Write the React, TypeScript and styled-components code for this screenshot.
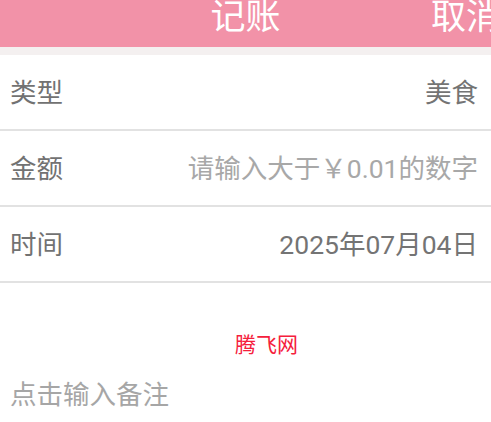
import React from "react";
import styled, { createGlobalStyle } from "styled-components";

const Global = createGlobalStyle`
  html, body {
    margin: 0;
    padding: 0;
    background: #ffffff;
  }
  body {
    font-family: Roboto, "Noto Sans CJK SC", sans-serif;
    overflow: hidden;
  }
`;

const Screen = styled.div`
  width: 491px;
  height: 422px;
  overflow: hidden;
  display: flex;
  flex-direction: column;
  background: #ffffff;
`;

const TopBar = styled.header`
  height: 47px;
  flex: none;
  background: #f292a8;
  display: grid;
  grid-template-columns: 1fr auto 1fr;
  align-items: end;
  padding-bottom: 19px;
  box-sizing: border-box;
  overflow: hidden;
  color: #ffffff;
  font-size: 35px;
  line-height: 35px;
  white-space: nowrap;
`;

const Title = styled.div`
  grid-column: 2;
`;

const Cancel = styled.div`
  grid-column: 3;
  justify-self: end;
  margin-right: -10px;
`;

const Strip = styled.div`
  height: 8px;
  flex: none;
  background: #f4f0f0;
`;

const Row = styled.div`
  height: 74px;
  flex: none;
  display: flex;
  align-items: center;
  justify-content: space-between;
  padding: 0 13px 0 10px;
  border-bottom: 2px solid #e2e2e2;
  font-size: 26.5px;
  line-height: 27px;
`;

const Label = styled.span`
  color: #727272;
`;

const Value = styled.span<{ $placeholder?: boolean }>`
  color: ${(p) => (p.$placeholder ? "#a8a8a8" : "#747474")};
`;

const Brand = styled.div`
  margin-top: 52px;
  text-align: center;
  padding-left: 42px;
  font-size: 21px;
  line-height: 21px;
  color: #f5203c;
`;

const Remark = styled.div`
  margin-top: 26px;
  padding-left: 10px;
  font-size: 26.5px;
  line-height: 26px;
  color: #a6a6a6;
`;

export default function App() {
  return (
    <Screen>
      <Global />
      <TopBar>
        <Title>记账</Title>
        <Cancel>取消</Cancel>
      </TopBar>
      <Strip />
      <Row>
        <Label>类型</Label>
        <Value>美食</Value>
      </Row>
      <Row>
        <Label>金额</Label>
        <Value $placeholder>请输入大于￥0.01的数字</Value>
      </Row>
      <Row>
        <Label>时间</Label>
        <Value>2025年07月04日</Value>
      </Row>
      <Brand>腾飞网</Brand>
      <Remark>点击输入备注</Remark>
    </Screen>
  );
}
